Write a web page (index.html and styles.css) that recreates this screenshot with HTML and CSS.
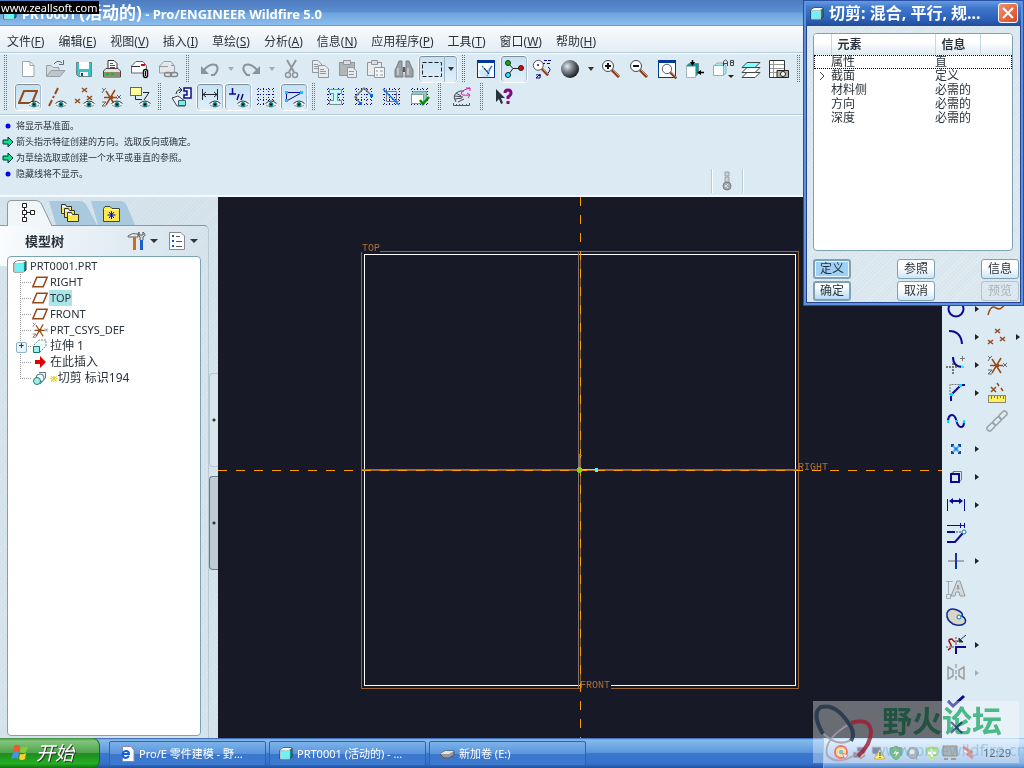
FILE: index.html
```html
<!DOCTYPE html>
<html lang="zh-CN">
<head>
    <meta charset="UTF-8">
    <meta name="viewport" content="width=device-width, initial-scale=1.0">
    <title>PRT0001 (活动的) - Pro/ENGINEER Wildfire 5.0</title>
    <link rel="stylesheet" href="styles.css">
</head>
<body>

    <!-- Shared icons -->
    <svg class="defs" width="0" height="0" aria-hidden="true">
        <symbol id="eye" viewBox="0 0 12 8">
            <path d="M0 4Q6 -1 12 4Q6 10 0 4Z" fill="#fff"/>
            <path d="M.500 3.500Q6 -1.500 11.500 3.500" fill="none" stroke="#333"/>
            <path d="M1 5Q6 9 11 5" fill="none" stroke="#889"/>
            <circle cx="6" cy="4.500" r="2.500" fill="#0a8585"/>
            <circle cx="6" cy="4.500" r="1" fill="#000"/>
        </symbol>
        <symbol id="plane" viewBox="0 0 20 14">
            <path d="M1 13 L6 1 H19 L14 13Z" fill="none" stroke="#964b1a" stroke-width="2"/>
        </symbol>
        <symbol id="points" viewBox="0 0 20 18">
            <path d="M8 1l5 4m0-4l-5 4M1 12l5 4m0-4l-5 4M13 9l5 4m0-4l-5 4" fill="none" stroke="#964b1a" stroke-width="1.500"/>
        </symbol>
        <symbol id="csys" viewBox="0 0 20 20">
            <path d="M3 10.500H16M5 4L14 18M14 3L5 18" fill="none" stroke="#964b1a" stroke-width="1.500"/>
            <path d="M8 9h4v3H8z" fill="#964b1a"/>
            <path d="M1 1l2 2l2-2M3 3l-2 3M1 15h4l-4 4h4M16 8l4 4m0-4l-4 4" fill="none" stroke="#667"/>
        </symbol>
        <symbol id="cube" viewBox="0 0 14 13">
            <path d="M1 3 L4 1 H13 V10 L10 12 H1Z" fill="#0a9a9a" stroke="#333"/>
            <path d="M1 3 L4 1 H13 L10 3Z" fill="#fff"/>
            <path d="M1.500 3.500H10.500V12H1.500Z" fill="#6ef3f5" stroke="#b5c8c8"/>
        </symbol>
        <symbol id="grid" viewBox="0 0 20 20">
            <path d="M1 2.500H19M1 7.500H19M1 12.500H19M1 17.500H19M2.500 1V19M7.500 1V19M12.500 1V19M17.500 1V19" fill="none" stroke="#0a0a96" stroke-dasharray="1 2"/>
        </symbol>
        <symbol id="lens" viewBox="0 0 20 20">
            <path d="M11 11L18 18" stroke="#8a3a1a" stroke-width="3"/>
            <path d="M12 11L18 17" stroke="#e09a70"/>
            <circle cx="7" cy="7" r="5.500" fill="#fff" stroke="#445"/>
        </symbol>
    </svg>

    <header class="titlebar">
        <svg width="16" height="16"><use href="#cube" x="1" y="2" width="14" height="13"/></svg>
        <h1>PRT0001 <span class="han">(活动的)</span> - Pro/ENGINEER Wildfire 5.0</h1>
        <span class="recorder">www.zeallsoft.com</span>
    </header>

    <nav class="menubar">
        <button>文件(<u>F</u>)</button>
        <button>编辑(<u>E</u>)</button>
        <button>视图(<u>V</u>)</button>
        <button>插入(<u>I</u>)</button>
        <button>草绘(<u>S</u>)</button>
        <button>分析(<u>A</u>)</button>
        <button>信息(<u>N</u>)</button>
        <button>应用程序(<u>P</u>)</button>
        <button>工具(<u>T</u>)</button>
        <button>窗口(<u>W</u>)</button>
        <button>帮助(<u>H</u>)</button>
    </nav>

    <div class="toolbars">
        <!-- Standard toolbar -->
        <div class="toolbar">
            <span class="grip"></span>
            <button class="tool" aria-label="新建"><svg viewBox="0 0 24 24"><path d="M6.500 4.500H14L18 8.500V19.500H6.500Z" fill="#fff" stroke="#a0a6b0"/><path d="M14 4.500V8.500H18" fill="none" stroke="#a0a6b0"/></svg></button>
            <button class="tool" aria-label="打开"><svg viewBox="0 0 24 24"><path d="M2.500 19.500V8.500H7L9 10.500H15V13" fill="#d5dce0" stroke="#98a0a6"/><path d="M2.500 19.500L7 13.500H21L16 19.500Z" fill="#bcc6cb" stroke="#98a0a6"/><path d="M10 7Q14 2 18 6M19.500 3V7.500H15" fill="none" stroke="#667"/></svg></button>
            <button class="tool" aria-label="保存"><svg viewBox="0 0 24 24"><path d="M4.500 5.500H19.500V19.500H6.500L4.500 17.500Z" fill="#3cc0c0" stroke="#688"/><path d="M7 5H17V12H7Z" fill="#fff"/><path d="M8 15H16V19H8Z" fill="#eef"/><path d="M9 16h2v3H9z" fill="#155"/></svg></button>
            <button class="tool" aria-label="打印"><svg viewBox="0 0 24 24"><path d="M8 12V3.500H14L17 6.500V12" fill="#fff" stroke="#333"/><path d="M10 6.500h3M10 8.500h5M10 10.500h5" stroke="#555"/><path d="M3.500 14L6 11.500H18L20.500 14V20H3.500Z" fill="#e5e3da" stroke="#444"/><path d="M4 15H20V20H4Z" fill="#8d8b7d"/><path d="M6 17h3M11 17h3" stroke="#0c0" stroke-width="2"/></svg></button>
            <button class="tool" aria-label="发送邮件"><svg viewBox="0 0 24 24"><path d="M3.500 9L8 4.500H15L18.500 9V16H3.500Z" fill="#fff" stroke="#666"/><path d="M3.500 9.500H12" stroke="#333"/><path d="M13 8h4" stroke="#d00" stroke-width="2"/><rect x="15.500" y="12.500" width="4" height="8" rx="2" fill="#fff" stroke="#111" stroke-width="1.500"/><path d="M17.500 14v5" stroke="#111"/></svg></button>
            <button class="tool" aria-label="发送链接"><svg viewBox="0 0 24 24"><path d="M3.500 9L8 4.500H15L18.500 9V16H3.500Z" fill="#e5e8eb" stroke="#999fa6"/><path d="M3.500 9.500H12M15 8.500h3" stroke="#999"/><rect x="8.500" y="15.500" width="7" height="4" rx="2" fill="none" stroke="#888" stroke-width="1.500"/><rect x="14.500" y="15.500" width="7" height="4" rx="2" fill="none" stroke="#888" stroke-width="1.500"/></svg></button>
            <span class="grip"></span>
            <button class="tool" aria-label="撤消"><svg viewBox="0 0 24 24"><path d="M6 13Q12 6 18 8Q22 12 16 18H13" fill="none" stroke="#8b939a" stroke-width="2"/><path d="M3 9V17H11Z" fill="#8b939a"/></svg></button>
            <span class="drop off"></span>
            <button class="tool" aria-label="重做"><svg viewBox="0 0 24 24"><path d="M18 13Q12 6 6 8Q2 12 8 18H11" fill="none" stroke="#8b939a" stroke-width="2"/><path d="M21 9V17H13Z" fill="#8b939a"/></svg></button>
            <span class="drop off"></span>
            <button class="tool" aria-label="剪切"><svg viewBox="0 0 24 24"><path d="M7 3L14 15M16 3L9 15" stroke="#8f979c" stroke-width="2"/><circle cx="8" cy="18" r="2.500" fill="none" stroke="#8f979c" stroke-width="1.500"/><circle cx="15" cy="18" r="2.500" fill="none" stroke="#8f979c" stroke-width="1.500"/></svg></button>
            <button class="tool" aria-label="复制"><svg viewBox="0 0 24 24"><path d="M4.500 3.500H10L13.500 7V15.500H4.500Z" fill="#e8ecef" stroke="#8f979c"/><path d="M6 7.500h4M6 9.500h5M6 11.500h5" stroke="#8f979c"/><path d="M10.500 8.500H17L20.500 12V20.500H10.500Z" fill="#e8ecef" stroke="#8f979c"/><path d="M12 12.500h4M12 14.500h6M12 16.500h6" stroke="#8f979c"/></svg></button>
            <button class="tool" aria-label="粘贴"><svg viewBox="0 0 24 24"><path d="M3.500 5.500H18.500V18.500H3.500Z" fill="#b0b6b8" stroke="#8f979c"/><path d="M7.500 3.500H14.500V7.500H7.500Z" fill="#ddd" stroke="#8f979c"/><path d="M11.500 10.500H17L20.500 14V20.500H11.500Z" fill="#e8ecef" stroke="#8f979c"/><path d="M13 14.500h5M13 17.500h5" stroke="#8f979c"/></svg></button>
            <button class="tool" aria-label="选择性粘贴"><svg viewBox="0 0 24 24"><path d="M3.500 5.500H17.500V18.500H3.500Z" fill="#e8ecef" stroke="#8f979c"/><path d="M7.500 3.500H13.500V7.500H7.500Z" fill="#ddd" stroke="#8f979c"/><path d="M10.500 10.500H20.500V20.500H10.500Z" fill="#f4f6f7" stroke="#8f979c"/><path d="M12 14h2M12 18h2M16 14h3M16 18h3" stroke="#8f979c"/></svg></button>
            <button class="tool" aria-label="查找"><svg viewBox="0 0 24 24"><path d="M5 9L7 4H10V9L11 20H3V13ZM19 9L17 4H14V9L13 20H21V13Z" fill="#9aa0a4" stroke="#777d82"/><path d="M11 10h2v5h-2z" fill="#555c61"/><path d="M6 11v7M16 11v7" stroke="#e8ecef"/></svg></button>
            <button class="tool wide on" aria-label="选取框"><svg viewBox="0 0 24 24"><rect x="2.500" y="5.500" width="19" height="14" fill="none" stroke="#222" stroke-dasharray="4 2"/></svg><span class="drop"></span></button>
            <span class="grip"></span>
            <button class="tool" aria-label="草绘方向"><svg viewBox="0 0 24 24"><rect x="3.500" y="3.500" width="17" height="17" fill="#fff" stroke="#003a94"/><path d="M3 4.500H21" stroke="#003a94" stroke-width="3"/><path d="M4 14L9 11L16 15V20H8Z" fill="#cfeaff"/><path d="M8 9L15 16M17 10L13 19M18 9L14 14" stroke="#357fe0" stroke-width="1.500" stroke-dasharray="2 1"/><path d="M10 11L15 17" stroke="#222"/></svg></button>
            <button class="tool on" aria-label="旋转中心"><svg viewBox="0 0 24 24"><path d="M6 6L11 11.500L6 18M11 11.500H19" fill="none" stroke="#222"/><circle cx="6" cy="6" r="2.500" fill="#0b0" stroke="#222"/><circle cx="19" cy="11" r="2.500" fill="#e00" stroke="#222"/><circle cx="6" cy="18" r="2.500" fill="#2ef" stroke="#222"/></svg></button>
            <button class="tool" aria-label="定向模式"><svg viewBox="0 0 24 24"><use href="#lens" x="2" y="2" width="18" height="18"/><path d="M14 3.500h3M18 3.500h3M13 6.500h2M17 6.500h3M18 10q4 2 0 6M11 19q-4-2-5-1M6 21l4-4v4z" fill="none" stroke="#0a0a96"/><circle cx="8" cy="8" r="1" fill="#222"/></svg></button>
            <button class="tool" aria-label="外观库"><svg viewBox="0 0 24 24"><defs><radialGradient id="ball" cx=".35" cy=".35" r=".7"><stop offset="0" stop-color="#e4eaf0"/><stop offset=".4" stop-color="#838b95"/><stop offset="1" stop-color="#16181c"/></radialGradient></defs><circle cx="12" cy="12" r="9" fill="url(#ball)"/></svg></button>
            <span class="drop"></span>
            <button class="tool" aria-label="放大"><svg viewBox="0 0 24 24"><use href="#lens" x="2" y="2" width="20" height="20"/><path d="M6 9h6M9 6v6" stroke="#111" stroke-width="2"/></svg></button>
            <button class="tool" aria-label="缩小"><svg viewBox="0 0 24 24"><use href="#lens" x="2" y="2" width="20" height="20"/><path d="M6 9h6" stroke="#111" stroke-width="2"/></svg></button>
            <button class="tool" aria-label="重新调整"><svg viewBox="0 0 24 24"><rect x="3.500" y="3.500" width="17" height="17" fill="#fff" stroke="#003a94"/><path d="M3 4.500H21" stroke="#003a94" stroke-width="3"/><use href="#lens" x="6" y="6" width="17" height="17"/></svg></button>
            <button class="tool" aria-label="重定向"><svg viewBox="0 0 24 24"><path d="M3.500 9L6 6.500H15.500V16L12 20H4Z" fill="#0a9a9a" stroke="#688"/><path d="M3.500 9.500H12.500V20.500H3.500Z" fill="#fff" stroke="#9bb"/><path d="M9.500 3V6M21 15.500H16" stroke="#000" stroke-width="1.500"/><path d="M7 5h5l-2.500 4zM18 13v5l-4-2.500z" fill="#000"/></svg></button>
            <button class="tool" aria-label="已命名视图"><svg viewBox="0 0 24 24"><path d="M3 9L6 6H12L15 9V16L13 18H3Z" fill="#9ff0ee" stroke="#9ab"/><path d="M2.500 8.500H12.500V18.500H2.500Z" fill="#fff" stroke="#9ab"/><path d="M12.500 9V4.500l2-1.500l2 1.500V9M13 6.500h3M19.500 3.500h3v5h-3zM19 5.500h3" fill="none" stroke="#444"/><path d="M17 18h6l-3 3z" fill="#222"/></svg></button>
            <button class="tool" aria-label="层"><svg viewBox="0 0 24 24"><g stroke="#444"><path d="M3 20.500L8 15.500H21L16 20.500Z" fill="#fff"/><path d="M3 15.500L8 10.500H21L16 15.500Z" fill="#fff"/><path d="M3 10.500L8 5.500H21L16 10.500Z" fill="#8ff"/></g></svg></button>
            <button class="tool" aria-label="视图管理器"><svg viewBox="0 0 24 24"><path d="M2.500 3.500H17.500V20.500H2.500Z" fill="#fff" stroke="#333"/><path d="M3 7.500h14M3 11.500h14M3 15.500h14M6.500 4v16" stroke="#999"/><path d="M10 13.500H21.500V20.500H10Z" fill="#b5b3a4" stroke="#222"/><circle cx="16" cy="17" r="2.500" fill="#fff" stroke="#222"/></svg></button>
            <span class="grip"></span>
        </div>
        <!-- Datum display and sketcher toolbar -->
        <div class="toolbar">
            <span class="grip"></span>
            <button class="tool on" aria-label="基准平面"><svg viewBox="0 0 24 24"><use href="#plane" x="2" y="5" width="20" height="14"/><use href="#eye" x="12" y="15" width="12" height="8"/></svg></button>
            <button class="tool" aria-label="基准轴"><svg viewBox="0 0 24 24"><path d="M14 3L11 9M10 11L9 13M8 15L5 21" stroke="#964b1a" stroke-width="2"/><use href="#eye" x="11" y="15" width="12" height="8"/></svg></button>
            <button class="tool" aria-label="基准点"><svg viewBox="0 0 24 24"><use href="#points" x="2" y="2" width="20" height="18"/><use href="#eye" x="11" y="15" width="12" height="8"/></svg></button>
            <button class="tool" aria-label="坐标系"><svg viewBox="0 0 24 24"><use href="#csys" x="1" y="2" width="20" height="20"/><use href="#eye" x="11" y="15" width="12" height="8"/></svg></button>
            <button class="tool" aria-label="注释"><svg viewBox="0 0 24 24"><rect x="2.500" y="2.500" width="11" height="8" fill="#ffff9c" stroke="#666"/><path d="M7.500 11V14.500H14M15 7.500H21L16 15" fill="none" stroke="#222"/><use href="#eye" x="11" y="15" width="12" height="8"/></svg></button>
            <span class="grip"></span>
            <button class="tool" aria-label="草绘设置"><svg viewBox="0 0 24 24"><path d="M14 3h7v10h-7v-3h3V6h-3z" fill="#fff" stroke="#0a0a96" stroke-width="1.500"/><path d="M6 9Q7 4 11 5M9 2l3 3l-3 3" fill="none" stroke="#222"/><path d="M2 13L8 11L15 16V21H7Z" fill="#eef" stroke="#444"/><path d="M8.500 15.500h7v5h-7z" fill="#7ee" stroke="#366"/></svg></button>
            <button class="tool on" aria-label="显示尺寸"><svg viewBox="0 0 24 24"><path d="M4.500 4V15M19.500 4V15M5 9.500H19M8 7l-3 2.500l3 2.500M16 7l3 2.500l-3 2.500" fill="none" stroke="#223"/><use href="#eye" x="11" y="15" width="12" height="8"/></svg></button>
            <button class="tool on" aria-label="显示约束"><svg viewBox="0 0 24 24"><path d="M3 9H10M6.500 3V9M11 15L13 9M15 15L17 9" fill="none" stroke="#0a0a96" stroke-width="1.500"/><use href="#eye" x="11" y="15" width="12" height="8"/></svg></button>
            <button class="tool" aria-label="显示栅格"><svg viewBox="0 0 24 24"><use href="#grid" x="2" y="2" width="20" height="20"/><use href="#eye" x="11" y="15" width="12" height="8"/></svg></button>
            <button class="tool on" aria-label="显示顶点"><svg viewBox="0 0 24 24"><path d="M4.500 7.500H20L4.500 16Z" fill="none" stroke="#0a0a96"/><path d="M3 6h3v3H3zM18 6h3v3h-3zM3 14h3v3H3z" fill="#0cf"/><use href="#eye" x="11" y="15" width="12" height="8"/></svg></button>
            <span class="grip"></span>
            <button class="tool" aria-label="着色封闭环"><svg viewBox="0 0 24 24"><use href="#grid" x="2" y="2" width="20" height="20"/><path d="M5.500 4.500H17.500V8.500H13.500V15.500H17.500V19.500H5.500V15.500H9.500V8.500H5.500Z" fill="#bff" stroke="#888"/></svg></button>
            <button class="tool" aria-label="加亮开放端"><svg viewBox="0 0 24 24"><use href="#grid" x="2" y="2" width="20" height="20"/><path d="M8 18L3 12L12 3L20 11" fill="none" stroke="#777" stroke-width="1.500"/><path d="M7 17h3v3H7zM18 9h3v3h-3z" fill="#06e"/></svg></button>
            <button class="tool" aria-label="重叠几何"><svg viewBox="0 0 24 24"><use href="#grid" x="2" y="2" width="20" height="20"/><path d="M6.500 4V16.500H19M5 6.500H16.500V19" fill="none" stroke="#778"/><path d="M3 4L19 20" stroke="#0a70e8" stroke-width="1.500"/></svg></button>
            <button class="tool" aria-label="特征要求"><svg viewBox="0 0 24 24"><use href="#grid" x="2" y="2" width="20" height="20"/><path d="M3.500 9L6 6.500H18.500V15L15 18H4Z" fill="#8cc" stroke="#899"/><path d="M3.500 9.500H15.500V18.500H3.500Z" fill="#fff" stroke="#899"/><path d="M12 15L15 19L21 12" fill="none" stroke="#0a8a0a" stroke-width="2.500"/></svg></button>
            <span class="grip"></span>
            <button class="tool" aria-label="检查"><svg viewBox="0 0 24 24"><path d="M6 17Q1 9 10 6H14M5 11L13 12M6 8L11 11M5 14L12 13M8 17L14 14" fill="none" stroke="#445"/><path d="M20 3Q14 4 11 8Q11 11 19 10M16 3l4 0v3M17 8l3 2l-2 3" fill="none" stroke="#d51bb5"/><path d="M3.500 18V20.500H19.500V18M6.500 19v2M9.500 19v2M12.500 19v2M16.500 19v2" fill="none" stroke="#555"/></svg></button>
            <span class="grip"></span>
            <button class="tool" aria-label="上下文帮助"><svg viewBox="0 0 24 24"><path d="M4 4V17L7 14L9 19L11 18L9 13H13Z" fill="#2a333b"/><path d="M13 8Q13 5 16 5Q19 5 19 8Q19 10 16 12V14M16 16V19" fill="none" stroke="#800a80" stroke-width="3"/></svg></button>
        </div>
    </div>

    <!-- Message log -->
    <section class="messages">
        <ul>
            <li><svg viewBox="0 0 12 12"><circle cx="6" cy="6" r="2.500" fill="#00f"/></svg>将显示基准面。</li>
            <li><svg viewBox="0 0 12 12"><path d="M1 4H6V1L11 6L6 11V8H1Z" fill="#0ee08a" stroke="#034"/></svg>箭头指示特征创建的方向。选取反向或确定。</li>
            <li><svg viewBox="0 0 12 12"><path d="M1 4H6V1L11 6L6 11V8H1Z" fill="#0ee08a" stroke="#034"/></svg>为草绘选取或创建一个水平或垂直的参照。</li>
            <li><svg viewBox="0 0 12 12"><circle cx="6" cy="6" r="2.500" fill="#00f"/></svg>隐藏线将不显示。</li>
        </ul>
        <div class="regen">
            <svg viewBox="0 0 20 20"><path d="M8 1h4v4H8zM8 6h4v5H8z" fill="#ccd2d5" stroke="#99a0a5"/><circle cx="10" cy="15" r="4" fill="#a5abae" stroke="#777e83"/><path d="M8 14l3 3M8 16l3-3" stroke="#ddd"/></svg>
        </div>
    </section>

    <main class="workspace">
        <aside class="navigator">
            <div class="tabs">
                <button aria-label="模型树"><svg viewBox="0 0 42 26"><path d="M.500 26V4Q.500 .500 4 .500H28Q33 .500 35 5L45 26" fill="#f1f6f9" stroke="#8d979d"/><path d="M15.500 3.500h4v4h-4zM15.500 10.500h4v4h-4zM15.500 17.500h4v4h-4zM23.500 10.500h4v4h-4zM17.500 8v2M17.500 15v2M20 12.500h3" fill="#fff" stroke="#222"/></svg></button>
                <button aria-label="文件夹浏览器"><svg viewBox="0 0 42 26"><path d="M0 1H31Q35 1 38 6L48 25H7Z" fill="#a9c9df"/><g fill="#ffe94d" stroke="#333"><path d="M12.500 4.500h4l1 2h5v7h-10z"/><path d="M15.500 8.500h4l1 2h5v7h-10z"/><path d="M18.500 12.500h4l1 2h6v7h-11z"/></g><path d="M13 6.500h4M16 10.500h4M19 14.500h4" stroke="#fff"/></svg></button>
                <button aria-label="收藏夹"><svg viewBox="0 0 42 26"><path d="M0 1H29Q34 1 36 6L44 25H7Z" fill="#a9c9df"/><path d="M12.500 21.500V8.500L14 6.500H19L21 8.500H28.500V21.500Z" fill="#ffe94d" stroke="#444"/><path d="M13 9.500h15" stroke="#fff"/><path d="M20.500 11v8M16.500 15h8M18 12l5 6M23 12l-5 6" stroke="#00c"/></svg></button>
            </div>
            <div class="panel">
                <div class="panel-head">
                    <h2>模型树</h2>
                    <button aria-label="设置"><svg width="20" height="20" viewBox="0 0 20 20"><path d="M1 5Q5 1 11 3V6H1Z" fill="#dfe6ea" stroke="#666"/><path d="M7.500 6V19" stroke="#d56a10" stroke-width="3"/><path d="M14.500 9V19" stroke="#1560d0" stroke-width="3"/><path d="M13 9V6Q10 4 12 1V4H16V1Q20 4 16 6V9" fill="#ddd" stroke="#555"/></svg><span class="drop"></span></button>
                    <button aria-label="显示"><svg width="20" height="20" viewBox="0 0 20 20"><path d="M2.500 1.500H14L17.500 5V18.500H2.500Z" fill="#fff" stroke="#889"/><path d="M5 5h2M5 10h2M5 15h2" stroke="#15c" stroke-width="2"/><path d="M9 5.500h4M9 10.500h6M9 15.500h6" stroke="#555"/></svg><span class="drop"></span></button>
                </div>
                <div class="tree">
                    <div class="root"><svg width="14" height="13"><use href="#cube"/></svg>PRT0001.PRT</div>
                    <ul>
                        <li><svg width="16" height="16"><use href="#plane" y="2" width="16" height="12"/></svg><span>RIGHT</span></li>
                        <li><svg width="16" height="16"><use href="#plane" y="2" width="16" height="12"/></svg><span class="picked">TOP</span></li>
                        <li><svg width="16" height="16"><use href="#plane" y="2" width="16" height="12"/></svg><span>FRONT</span></li>
                        <li><svg width="16" height="16"><use href="#csys" width="16" height="16"/></svg><span>PRT_CSYS_DEF</span></li>
                        <li class="han closed"><svg width="16" height="16" viewBox="0 0 16 16"><path d="M2 7L7 2H14V8L8 14" fill="#eefcfc" stroke="#788" stroke-dasharray="2 1"/><path d="M1.500 8.500H7.500V14.500H1.500Z" fill="#9ef0ec" stroke="#177"/></svg><span>拉伸 1</span></li>
                        <li class="han"><svg width="16" height="16" viewBox="0 0 16 16"><path d="M3 6H8V2L14 8L8 14V10H3Z" fill="#e00000"/></svg><span>在此插入</span></li>
                        <li class="han"><svg width="16" height="16" viewBox="0 0 16 16"><path d="M7 2.500H13.500V8L8 14" fill="#dff2f5" stroke="#678"/><circle cx="8" cy="8" r="4" fill="#eff" stroke="#678"/><circle cx="5" cy="11" r="3.500" fill="#9ef0ec" stroke="#277"/></svg><span><b class="mark">※</b>切剪 标识194</span></li>
                    </ul>
                </div>
            </div>
            <div class="sashes"><button class="sash" aria-label="折叠浏览器"></button><button class="sash dark" aria-label="折叠导航器"></button></div>
        </aside>

        <!-- Graphics window -->
        <div class="viewport">
            <svg viewBox="0 0 724 541" preserveAspectRatio="xMidYMid slice" fill="none" shape-rendering="crispEdges">
                <path d="M162 54.500H580.500V491.500H393M362 491.500H143.500V55" stroke="#996633"/>
                <path d="M362 488.500H146.500V57.500H577.500V488.500H393" stroke="#fff"/>
                <path d="M360.500 54V491M143 272.500H580" stroke="#777472"/>
                <path d="M362.500 54V491M143 273.500H580" stroke="#996633"/>
                <path d="M362.500 0V541M0 273.500H724" stroke="#ff9a00" stroke-dasharray="9 9"/>
                <path d="M361.500 257V272M360 258.500H364" stroke="#ff4020"/>
                <path d="M363 272.500H379" stroke="#3ff"/>
                <path d="M377 271h3v4h-3z" fill="#3ff"/>
                <path d="M359 271h5v4h-5zM360 270h3v6h-3z" fill="#8c2"/>
                <g class="datum">
                    <text x="144" y="54">TOP</text>
                    <text x="580" y="273">RIGHT</text>
                    <text x="362" y="491">FRONT</text>
                </g>
            </svg>
        </div>

        <!-- Sketcher and datum tools -->
        <div class="sidebar">
            <button class="tool" aria-label="圆"><svg viewBox="0 0 24 24"><circle cx="12" cy="12" r="7.500" fill="none" stroke="#0a0a96" stroke-width="2"/></svg></button>
            <span class="more"></span>
            <button class="tool third" aria-label="曲线"><svg viewBox="0 0 24 24"><path d="M3 18Q6 7 11 11Q16 14 20 7" fill="none" stroke="#964b1a" stroke-width="1.500"/></svg></button>

            <button class="tool first" aria-label="圆弧"><svg viewBox="0 0 24 24"><path d="M5 6Q17 6 18 19" fill="none" stroke="#0a0a96" stroke-width="2"/></svg></button>
            <span class="more"></span>
            <button class="tool" aria-label="点"><svg viewBox="0 0 24 24"><use href="#points" x="2" y="3" width="20" height="18"/></svg></button>
            <span class="more"></span>

            <button class="tool first" aria-label="圆角"><svg viewBox="0 0 24 24"><path d="M9 4Q9 14 19 14" fill="none" stroke="#0a0a96" stroke-width="2"/><path d="M18.500 3v5M16 5.500h5" stroke="#777"/><path d="M2 14H14M9 10V21" fill="none" stroke="#777" stroke-width="2" stroke-dasharray="2 1"/><path d="M17 13h3v2h-3z" fill="#0ff"/></svg></button>
            <span class="more"></span>
            <button class="tool third" aria-label="坐标系"><svg viewBox="0 0 24 24"><use href="#csys" x="2" y="2" width="20" height="20"/></svg></button>

            <button class="tool first" aria-label="倒角"><svg viewBox="0 0 24 24"><path d="M21 4H17L7 14V20" fill="none" stroke="#0a0a96" stroke-width="2"/><path d="M6 14V3.500H16" fill="none" stroke="#777" stroke-dasharray="2 1"/><path d="M6 12h3v3H6zM15 3h3v3h-3z" fill="#0df"/></svg></button>
            <span class="more"></span>
            <button class="tool third" aria-label="分析特征"><svg viewBox="0 0 24 24"><path d="M6 6l5 5m0-5l-5 5M12 2l2 3M16 7l2 3" stroke="#964b1a" stroke-width="1.500"/><rect x="3.500" y="14.500" width="17" height="7" fill="#ffef5a" stroke="#887"/><path d="M6.500 15v3M9.500 15v2M12.500 15v3M15.500 15v2M18.500 15v3" stroke="#776"/></svg></button>

            <button class="tool first" aria-label="样条"><svg viewBox="0 0 24 24"><path d="M4 13Q4 6 8 6Q11 6 12.500 12Q14 18 17 18Q20 18 20 13" fill="none" stroke="#0a0a96" stroke-width="2"/><path d="M3 11h2v3H3zM11 11h3v2h-3zM19 11h2v3h-2z" fill="#0df"/></svg></button>
            <button class="tool third" aria-label="参照"><svg viewBox="0 0 24 24"><g fill="none" stroke="#9ba1a5" stroke-width="1.500"><rect x="-4.500" y="-2.500" width="9" height="5" rx="2" transform="translate(6 18) rotate(-45)"/><rect x="-4.500" y="-2.500" width="9" height="5" rx="2" transform="translate(12 12) rotate(-45)"/><rect x="-4.500" y="-2.500" width="9" height="5" rx="2" transform="translate(18 6) rotate(-45)"/></g></svg></button>

            <button class="tool first" aria-label="草绘点"><svg viewBox="0 0 24 24"><path d="M7 7h3v3H7zM14 7h3v3h-3zM7 14h3v3H7zM14 14h3v3h-3z" fill="#0a4a94"/><path d="M9 9L15 15M15 9L9 15" stroke="#5ab4ff" stroke-width="2"/><path d="M10.500 10.500h3v3h-3z" fill="#1a80f0"/></svg></button>
            <span class="more"></span>

            <button class="tool first" aria-label="使用边"><svg viewBox="0 0 24 24"><path d="M7 9L9 6.500H17.500V15L15 17M9.500 9V6.500" fill="none" stroke="#777"/><rect x="7" y="9" width="8" height="8" fill="none" stroke="#0a0a96" stroke-width="2"/></svg></button>
            <span class="more"></span>

            <button class="tool first" aria-label="尺寸"><svg viewBox="0 0 24 24"><path d="M3.500 6V18M20.500 6V18" stroke="#0a0a96"/><path d="M6 8H18" stroke="#0a0a96" stroke-width="2"/><path d="M9 5v6L5 8zM15 5v6l4-3z" fill="#0a0a96"/></svg></button>
            <span class="more"></span>

            <button class="tool first" aria-label="修改"><svg viewBox="0 0 24 24"><path d="M3 4.500H20M16.500 2V7M20.500 2V7" stroke="#0a0a96"/><path d="M3 11H11M3 21H11L19 12" fill="none" stroke="#0a0a96" stroke-width="2"/><path d="M12 11H18" stroke="#999" stroke-width="2" stroke-dasharray="2 1"/><circle cx="20" cy="11" r="2" fill="#fff" stroke="#07a"/></svg></button>

            <button class="tool first" aria-label="约束"><svg viewBox="0 0 24 24"><path d="M4 12H20" stroke="#aaa" stroke-width="2"/><path d="M12 4V20" stroke="#0a3a9a" stroke-width="2"/></svg></button>
            <span class="more"></span>

            <button class="tool first" aria-label="文本"><svg viewBox="0 0 24 24"><path d="M2 4.500H9M4.500 5V17M2.500 17.500h4v4h-4z" fill="none" stroke="#a5abb0"/><path d="M7 19L13 4H16L21 19H16L15 15H12L11 19ZM13 12H15L14 8Z" fill="#d3d8db" stroke="#939a9f"/></svg></button>

            <button class="tool first" aria-label="调色板"><svg viewBox="0 0 24 24"><path d="M3 8Q5 2 13 5Q20 8 18 11Q23 14 21 18Q17 22 9 19Q2 15 3 8Z" fill="#d9d6c7" stroke="#0a2a9a" stroke-width="1.500"/><circle cx="15" cy="12" r="2" fill="#fff" stroke="#07a"/></svg></button>

            <button class="tool first" aria-label="修剪"><svg viewBox="0 0 24 24"><path d="M4 17Q9 14 6 10Q3 6 8 6Q10 10 14 8" fill="none" stroke="#a01010" stroke-width="1.500"/><path d="M2 14h8M12 4v9" stroke="#999" stroke-width="2" stroke-dasharray="2 1"/><path d="M12 21V14H22" fill="none" stroke="#0a0a96" stroke-width="2"/><path d="M22 2L16 7" stroke="#234"/><path d="M15 5v4h4z" fill="#234" stroke="#234"/></svg></button>
            <span class="more"></span>

            <button class="tool first" aria-label="镜像"><svg viewBox="0 0 24 24"><path d="M4 6L9 9V15L4 18ZM20 6L15 9V15L20 18Z" fill="#dfe4e7" stroke="#9aa1a5" stroke-width="1.500"/><path d="M12 3V21" stroke="#888" stroke-dasharray="4 2"/></svg></button>
            <span class="more off"></span>

            <button class="tool first" aria-label="完成"><svg viewBox="0 0 24 24"><path d="M4 12L9 17L20 7" fill="none" stroke="#0a0a96" stroke-width="3"/></svg></button>

            <button class="tool first" aria-label="退出"><svg viewBox="0 0 24 24"><path d="M7 5L18 16M18 5L7 16" fill="none" stroke="#0a0a76" stroke-width="2"/></svg></button>
        </div>
    </main>

    <footer class="taskbar">
        <button class="start">
            <svg width="18" height="18" viewBox="0 0 18 18"><path d="M3 2Q6 0 9 2L8 8Q5 6 2 8Z" fill="#f0582a"/><path d="M10 3Q13 4 17 2L15 8Q12 10 9 8Z" fill="#7fd03a"/><path d="M2 9Q5 7 8 9L7 15Q4 13 0 15Z" fill="#4a8ef0"/><path d="M9 10Q12 11 15 9L14 15Q11 17 8 15Z" fill="#ffcf2a"/></svg>
            开始
        </button>
        <div class="tasks">
            <button><svg width="16" height="16" viewBox="0 0 16 16"><path d="M3.500 .500H12L15 4V15.500H3.500Z" fill="#fff" stroke="#88a"/><path d="M10 10Q6 14 4 10Q3 5 7 5Q10 5 10 8H4" fill="none" stroke="#1560d8" stroke-width="2"/></svg><span>Pro/E 零件建模 - 野…</span></button>
            <button><svg width="14" height="13"><use href="#cube"/></svg><span>PRT0001 (活动的) - …</span></button>
            <button><svg width="16" height="16" viewBox="0 0 16 16"><path d="M1 8L6 5H15V9L10 12H5Z" fill="#999" stroke="#555"/><path d="M1 8L6 5H15L10 8Z" fill="#e4e4e4"/></svg><span>新加卷 (E:)</span></button>
        </div>
        <div class="tray">
            <svg viewBox="0 0 16 16"><circle cx="7" cy="7" r="6" fill="#fff" stroke="#e23" stroke-width="2"/><circle cx="7" cy="7" r="4" fill="none" stroke="#fc2" stroke-width="2"/><circle cx="7" cy="7" r="2" fill="#3b5" stroke="#28e"/><path d="M8 8l6 2l-3 4z" fill="#fdd" stroke="#a55"/></svg>
            <svg viewBox="0 0 16 16"><path d="M5 2h8v7H5zM1 7h8v6H1z" fill="#447" stroke="#aab"/><path d="M8 14l5-4" stroke="#966" stroke-width="2"/></svg>
            <svg viewBox="0 0 16 16"><path d="M2 2h9v7H2z" fill="#447" stroke="#aab"/><path d="M10 4L15 14H4Z" fill="#fd3" stroke="#a80"/><path d="M10 7v4M10 12v1" stroke="#222" stroke-width="1.500"/></svg>
            <svg viewBox="0 0 16 16"><path d="M2 3Q6 3 8 1Q10 3 14 3Q15 11 8 15Q1 11 2 3Z" fill="#3a9a3a" stroke="#276"/><path d="M9 4L5 9H8L7 12L11 7H8Z" fill="#fff"/></svg>
            <svg viewBox="0 0 16 16"><circle cx="7" cy="8" r="5.500" fill="#8a9199" stroke="#666"/><circle cx="6" cy="7" r="2.500" fill="#ddd"/><path d="M12 13q3-4 1-8" stroke="#ccd" fill="none"/></svg>
            <svg viewBox="0 0 16 16"><path d="M2 3Q6 3 8 1Q10 3 14 3Q15 11 8 15Q1 11 2 3Z" fill="#7fd03a" stroke="#bd7"/><path d="M8 4v8M4 8h8" stroke="#fff" stroke-width="2.500"/></svg>
            <svg viewBox="0 0 16 16"><path d="M1 1h14v10H1z" fill="#888" stroke="#555"/><path d="M2 14h4M9 14h5" stroke="#666" stroke-width="2"/></svg>
            <svg viewBox="0 0 16 16"><path d="M3 2l8 5l-3 2l5 4" fill="none" stroke="#c55" stroke-width="3"/><path d="M3 5l5 3" stroke="#fff"/></svg>
            <time>12:29</time>
        </div>
    </footer>

    <!-- Cut feature dialog -->
    <section class="dialog">
        <header>
            <svg width="14" height="13"><use href="#cube"/></svg>
            <h2>切剪: 混合, 平行, 规...</h2>
            <button class="close" aria-label="关闭"><svg width="12" height="12" viewBox="0 0 12 12"><path d="M1 1L11 11M11 1L1 11" stroke="#fff" stroke-width="2"/></svg></button>
        </header>
        <div class="dialog-body">
            <div class="elements">
                <table>
                    <thead>
                        <tr><th></th><th>元素</th><th>信息</th><th></th></tr>
                    </thead>
                    <tbody>
                        <tr class="focus"><td></td><td>属性</td><td colspan="2">直</td></tr>
                        <tr><td><svg width="6" height="10" viewBox="0 0 6 10"><path d="M1 1L5 5L1 9" fill="none" stroke="#444"/></svg></td><td>截面</td><td colspan="2">定义</td></tr>
                        <tr><td></td><td>材料侧</td><td colspan="2">必需的</td></tr>
                        <tr><td></td><td>方向</td><td colspan="2">必需的</td></tr>
                        <tr><td></td><td>深度</td><td colspan="2">必需的</td></tr>
                    </tbody>
                </table>
            </div>
            <div class="actions">
                <button class="strong filled">定义</button>
                <button>参照</button>
                <button>信息</button>
                <button class="strong">确定</button>
                <button>取消</button>
                <button disabled>预览</button>
            </div>
        </div>
    </section>

    <div class="forum">
        <svg width="60" height="62" viewBox="0 0 60 62" fill="none"><path d="M38 22Q10 38 14 54Q24 66 45 52" stroke="#a89fac" stroke-width="2"/><path d="M8 30Q22 46 36 40Q46 30 28 12" stroke="#9c9ca8" stroke-width="2"/><path d="M10 33Q-2 12 8 6Q24 2 38 26Q42 34 38 40" stroke="#1d3348" stroke-width="4"/><path d="M38 22Q56 16 58 30Q58 44 45 55" stroke="#9c1c30" stroke-width="4"/></svg>
        <div>
            <strong>野火论坛</strong>
            <span>www.proewildfire.cn</span>
        </div>
    </div>

</body>
</html>
```

FILE: styles.css
```css
* {
    box-sizing: border-box;
}

body {
    margin: 0;
    height: 100vh;
    display: flex;
    flex-direction: column;
    overflow: hidden;
    position: relative;
    background: #dceaf3;
    color: #2a333b;
    font: 12px/16px "Noto Sans", "Noto Sans CJK SC", sans-serif;
}

h1, h2, ul {
    margin: 0;
    padding: 0;
    list-style: none;
}

button {
    padding: 0;
    border: none;
    background: none;
    color: inherit;
    font: inherit;
}

svg {
    flex: none;
    display: block;
}

.defs {
    position: absolute;
}

/* Title bar */
.titlebar {
    flex: none;
    height: 26px;
    display: flex;
    align-items: center;
    gap: 4px;
    padding-left: 2px;
    position: relative;
    background: linear-gradient(#4f7cc0, #5a8fd0 45%, #6ba3de 50%, #8bbcec 94%, #5a8ac0);
    color: #fff;
}

.titlebar h1 {
    font-size: 13px;
    font-weight: bold;
    white-space: nowrap;
}

.titlebar .han {
    font-size: 17px;
}

.recorder {
    position: absolute;
    left: 0;
    top: 1px;
    padding: 0 1px;
    background: #000;
    font-size: 11px;
    line-height: 13px;
}

/* Menu bar */
.menubar {
    flex: none;
    height: 26px;
    display: flex;
    align-items: center;
    background: linear-gradient(#f8fbfd, #e4eef4);
}

.menubar button {
    padding: 5px 7px 0;
}

/* Toolbars */
.toolbars {
    flex: none;
    padding: 2px 0 3px;
    border-top: 1px solid #b3cbdb;
    border-bottom: 1px solid #b3cbdb;
    box-shadow: 0 1px #fff, inset 0 1px #fff;
}

.toolbar {
    display: flex;
    height: 28px;
}

.grip {
    flex: none;
    width: 14px;
    padding: 0 7px 0 4px;
}

.grip::before {
    content: "";
    display: block;
    height: 27px;
    background:
        repeating-linear-gradient(transparent 0 1px, #dceaf3 1px 2px),
        repeating-linear-gradient(90deg, #4f7896 0 1px, transparent 1px 2px);
}

.tool {
    flex: none;
    display: flex;
    align-items: center;
    justify-content: center;
    width: 28px;
    height: 28px;
    border: 1px solid transparent;
}

.tool svg {
    width: 24px;
    height: 24px;
}

.tool.on {
    border: 1px solid #fff;
    border-radius: 4px;
    background: linear-gradient(#c5e0f3, #e0f0fa);
    box-shadow: inset 0 1px #7d8d99, inset 1px 0 #8b9ba8, inset -1px 0 #a8bccb;
}

.tool.wide {
    width: 40px;
}

.drop {
    flex: none;
    width: 13px;
    display: flex;
    align-items: center;
    justify-content: center;
}

.drop::before {
    content: "";
    border: 3px solid transparent;
    border-top: 4px solid #333;
    border-bottom: none;
}

.drop.off::before {
    border-top-color: #a5adb3;
}

.wide .drop {
    height: 26px;
    border-left: 1px solid #9db4c4;
}

.panel-head .drop {
    width: 14px;
}

.panel-head .drop::before {
    border-width: 4px 4px 0;
}

/* Message log */
.messages {
    flex: none;
    display: flex;
    justify-content: space-between;
    align-items: flex-end;
    height: 82px;
    padding: 3px 281px 2px 2px;
    border-bottom: 2px solid #f4f9fc;
    font-size: 9px;
}

.messages ul {
    align-self: flex-start;
}

.messages li {
    display: flex;
    align-items: center;
    gap: 2px;
}

.messages svg {
    width: 12px;
    height: 12px;
}

.regen {
    padding: 2px 4px;
    border: solid #b8ccd8;
    border-width: 0 1px;
    box-shadow: 1px 0 #fff, inset 1px 0 #fff;
}

.messages .regen svg {
    width: 22px;
    height: 20px;
}

/* Workspace */
.workspace {
    flex: 1;
    min-height: 0;
    display: flex;
}

.navigator {
    flex: none;
    width: 218px;
    display: grid;
    grid-template: 28px 1fr / 209px 9px;
    background: repeating-linear-gradient(135deg, #d2e1ea 0 2px, #d9e6ee 2px 3px);
}

.tabs {
    grid-column: 1 / 3;
    display: flex;
    padding: 3px 0 0 7px;
}

.tabs svg {
    width: 42px;
    height: 26px;
    overflow: visible;
}

.tabs button:first-child {
    z-index: 1;
}

.panel {
    display: flex;
    flex-direction: column;
    min-height: 0;
    padding: 0 7px 2px;
    border-top: 1px solid #8d979d;
    border-right: 1px solid #b9cad5;
    border-top-right-radius: 5px;
    background: linear-gradient(100deg, #fafcfd, #e0ebf2 60%, transparent) no-repeat 0 0 / 100% 40px;
}

.panel-head {
    height: 30px;
    display: flex;
    align-items: center;
    gap: 6px;
}

.panel-head h2 {
    margin: 0 auto 0 18px;
    font-size: 13px;
}

.panel-head button {
    display: flex;
}

.tree {
    flex: 1;
    padding: 1px 5px;
    border: 1px solid #7ba3b5;
    border-radius: 4px;
    background: #fff;
    font-size: 11px;
}

.root,
.tree li {
    display: flex;
    align-items: center;
    height: 16px;
}

.root {
    gap: 3px;
}

.tree ul {
    margin-left: 7px;
    background: repeating-linear-gradient(#999 0 1px, transparent 1px 2px) no-repeat 0 0 / 1px 104px;
}

.tree li {
    gap: 2px;
    padding-left: 12px;
    position: relative;
    background: repeating-linear-gradient(90deg, #999 0 1px, transparent 1px 2px) no-repeat 0 8px / 11px 1px;
}

.tree li.han {
    font-size: 12px;
}

.closed::before {
    content: "+";
    position: absolute;
    left: -4px;
    top: 4px;
    width: 9px;
    height: 9px;
    border: 1px solid #8fb2c9;
    border-radius: 2px;
    background: #eaf4fa;
    font: bold 9px/7px "Liberation Sans", sans-serif;
    text-align: center;
}

.picked {
    margin-left: -1px;
    padding: 0 1px;
    background: #aae5ea;
}

.mark {
    color: #d8c800;
    font-size: 9px;
}

.sashes {
    display: flex;
    flex-direction: column;
    gap: 9px;
    padding-top: 148px;
}

.sash {
    height: 94px;
    border: 1px solid #b3c8d6;
    border-right: none;
    border-radius: 4px 0 0 4px;
    background: radial-gradient(circle, #333 1px, transparent 2px), #d8e5ed;
}

.sash.dark {
    border-color: #6c7b86;
    background: radial-gradient(circle, #333 1px, transparent 2px), #c0ccd5;
}

.viewport {
    flex: 1;
    min-width: 0;
    background: #171927;
}

.viewport svg {
    width: 100%;
    height: 100%;
}

.datum {
    fill: #a8703a;
    font: 10px "Liberation Mono", monospace;
}

.sidebar {
    flex: none;
    display: grid;
    grid-template-columns: 28px 13px 28px 13px;
    grid-auto-rows: 28px;
    overflow: hidden;
    padding-top: 98px;
}

.first {
    grid-column: 1;
}

.third {
    grid-column: 3;
}

.more {
    display: flex;
    align-items: center;
    justify-content: center;
}

.more::before {
    content: "";
    border: 3px solid transparent;
    border-left: 4px solid #222;
    border-right: none;
}

.more.off::before {
    border-left-color: #a5adb3;
}

/* Task bar */
.taskbar {
    flex: none;
    height: 30px;
    display: flex;
    background: linear-gradient(#2c57a8, #86bcec 6%, #5b97dc 48%, #3a77cc 52%, #3572cc 85%, #2350a0);
    color: #fff;
}

.start {
    display: flex;
    align-items: center;
    gap: 7px;
    width: 100px;
    padding-left: 11px;
    border-radius: 0 8px 8px 0;
    background: linear-gradient(#3f8f3f, #84c47e 10%, #4da34b 50%, #1f8a1f 52%, #23b023 85%, #157015);
    box-shadow: inset -1px 0 #1c661c;
    font-size: 19px;
    font-style: italic;
    text-shadow: 1px 1px #333;
}

.tasks {
    flex: 1;
    min-width: 0;
    display: flex;
    gap: 3px;
    padding: 3px 0 2px 9px;
}

.tasks button {
    display: flex;
    align-items: center;
    gap: 4px;
    width: 157px;
    padding: 0 9px;
    border: 1px solid #2f63ac;
    border-radius: 2px;
    background: linear-gradient(#7db2ea, #5a96dc 50%, #3b77cc 52%, #3c7ad0);
    font-size: 11px;
    white-space: nowrap;
}

.tray {
    display: flex;
    align-items: center;
    gap: 2px;
    padding: 0 13px 0 10px;
    border-left: 1px solid #7fb0e0;
    background: linear-gradient(#8fc4f2, #d2e8fb 6%, #a4c8ee 50%, #86b2e6 85%, #4a84cc);
    color: #112;
}

.tray svg {
    width: 16px;
    height: 16px;
}

.tray time {
    margin-left: 5px;
    font-size: 11px;
}

/* Dialog */
.dialog {
    position: absolute;
    top: 0;
    right: 0;
    width: 221px;
    border: 3px solid #5f92dc;
    border-top: none;
    outline: 1px solid #2850a8;
    outline-offset: -1px;
    background: #24428f;
}

.dialog header {
    display: flex;
    align-items: center;
    gap: 5px;
    height: 26px;
    padding: 0 3px 0 4px;
    background: linear-gradient(#6ba0e0, #3f78cc 30%, #2c60b8 75%, #234a98);
    color: #fff;
}

.dialog h2 {
    flex: 1;
    font-size: 16px;
    line-height: 20px;
    white-space: nowrap;
}

.close {
    display: flex;
    align-items: center;
    justify-content: center;
    width: 20px;
    height: 20px;
    border: 1px solid #fff;
    border-radius: 3px;
    background: linear-gradient(135deg, #f09070, #d84a24);
}

.dialog-body {
    margin: 0 1px 1px;
    padding: 7px 1px 1px 6px;
    background: repeating-linear-gradient(135deg, #d9e6ee 0 2px, #e0ebf2 2px 3px);
}

.elements {
    height: 218px;
    margin-right: 6px;
    border: 1px solid #7ba3b5;
    border-radius: 4px;
    overflow: hidden;
    background: #fff;
}

.elements table {
    width: 100%;
    border-collapse: collapse;
    table-layout: fixed;
}

.elements th,
.elements td {
    padding: 0;
    text-align: left;
    line-height: 14px;
}

.elements th {
    height: 21px;
    padding-left: 6px;
    background: linear-gradient(#fff 40%, #dce9f1);
    border-right: 1px solid #c5d6e0;
}

.elements th:first-child {
    width: 17px;
}

.elements th:nth-child(2) {
    width: 104px;
}

.elements th:nth-child(3) {
    width: 45px;
}

.elements th:last-child {
    border-right: none;
}

.elements td svg {
    margin-left: 5px;
}

.focus {
    outline: 1px dotted #000;
    outline-offset: -1px;
}

.actions {
    display: grid;
    grid-template-columns: repeat(3, 38px);
    justify-content: space-between;
    gap: 2px;
    margin-top: 8px;
}

.actions button {
    height: 20px;
    border: 1px solid #7ba3b5;
    border-radius: 3px;
    background: linear-gradient(#fff 40%, #cfe5f5);
    line-height: 16px;
}

.actions .strong {
    border-width: 2px;
    background: linear-gradient(#fff 20%, #b5daf6);
    line-height: 14px;
}

.actions .filled {
    background: #9fd0f6;
    box-shadow: inset 0 0 0 1px #e8f5fd;
}

.actions button:disabled {
    border-color: #b5c3cb;
    background: none;
    color: #a9b2b8;
}

/* Forum watermark */
.forum {
    position: absolute;
    right: 5px;
    bottom: 5px;
    display: flex;
    width: 206px;
    height: 62px;
    background: rgba(255, 255, 255, 0.36);
    pointer-events: none;
}

.forum svg {
    opacity: 0.8;
}

.forum div {
    display: flex;
    flex-direction: column;
}

.forum strong {
    padding-left: 9px;
    color: #52c48c;
    font-size: 30px;
    line-height: 40px;
    mix-blend-mode: multiply;
}

.forum span {
    color: #4fa3c4;
    font-size: 16px;
    line-height: 18px;
    opacity: 0.4;
}
```
